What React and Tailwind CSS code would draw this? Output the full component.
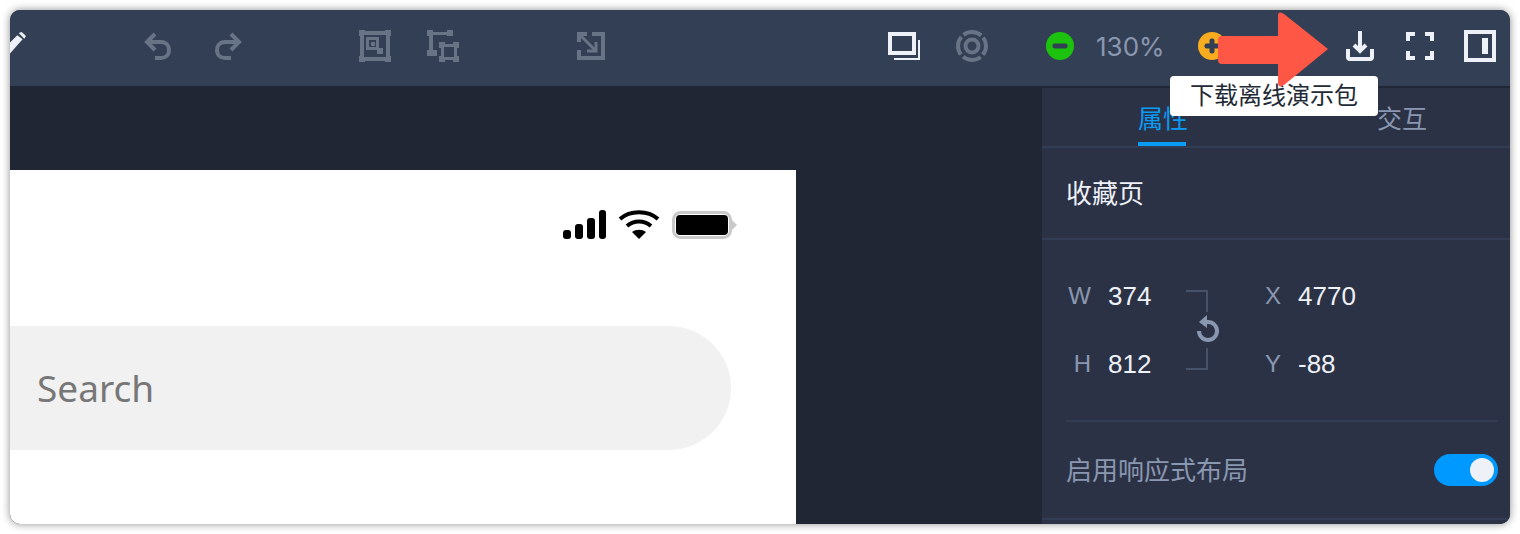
const cjk = '"Liberation Sans", "Noto Sans CJK SC", sans-serif'

function Pencil() {
  return (
    <svg width="17" height="30" viewBox="0 0 17 30">
      <path d="M0 11.6 L7.3 4.3 L12.6 8.3 L0 22.6 Z" fill="#eef1f7" />
      <path d="M8.7 2 L11.7 1 L16 5 L14.3 7.7 Z" fill="#eef1f7" />
    </svg>
  )
}

function Undo({ flip }) {
  return (
    <svg width="28" height="28" viewBox="0 0 28 28" className={flip ? '-scale-x-100' : ''} fill="none" stroke="#687386" strokeWidth="4">
      <path d="M11 2 L3 10 L11 18" />
      <path d="M4 10 H17 C22 10 25 13.5 25 18 C25 23 21.5 26 17 26 H11" />
    </svg>
  )
}

function FrameIcon() {
  return (
    <svg width="32" height="32" viewBox="0 0 32 32" fill="#687386">
      <path d="M0 0h6v1h20V0h6v6h-1v20h1v6h-6v-1H6v1H0v-6h1V6H0z M5 5v22h22V5z" fillRule="evenodd" />
      <path d="M7 7h13v13H7z M10 10v7h7v-7z" fillRule="evenodd" />
      <path d="M12 12h4v4h-4z" />
      <path d="M18 18h6v6h-6z" />
    </svg>
  )
}

function GroupIcon() {
  return (
    <svg width="32" height="32" viewBox="0 0 32 32" fill="#687386">
      <path d="M0 0h6v2h14V0h6v6h-6V5H6v15h4v6H0v-6h2V6H0z" />
      <path d="M12 12h6v2h8v-2h6v6h-2v8h2v6h-6v-2h-8v2h-6v-6h2v-8h-2z M17 17v10h10V17z" fillRule="evenodd" />
    </svg>
  )
}

function ResizeIcon() {
  return (
    <svg width="30" height="30" viewBox="0 0 30 30" fill="none" stroke="#687386" strokeWidth="4">
      <path d="M16 3 H27 V27 H3 V19" />
      <path d="M3 11 V3 H11" />
      <path d="M3 3 L20 20" strokeWidth="3" />
      <path d="M20 11 V20 H11" strokeWidth="3" />
    </svg>
  )
}

function LayersIcon() {
  return (
    <svg width="32" height="28" viewBox="0 0 32 28" fill="none">
      <rect x="2" y="2" width="24" height="19" stroke="#eef1f7" strokeWidth="4" />
      <path d="M6 27 H31 V8" stroke="#eef1f7" strokeWidth="2" />
    </svg>
  )
}

function TargetIcon() {
  return (
    <svg width="32" height="32" viewBox="0 0 32 32" fill="none" stroke="#687386">
      <circle cx="16" cy="16" r="14" strokeWidth="4" strokeDasharray="19 3" strokeDashoffset="9.5" />
      <circle cx="16" cy="16" r="6.5" strokeWidth="4" />
    </svg>
  )
}

function ZoomBtn({ color, plus }) {
  return (
    <svg width="28" height="28" viewBox="0 0 28 28">
      <circle cx="14" cy="14" r="14" fill={color} />
      <rect x="6.5" y="11.5" width="15" height="5" rx="2" fill="#333f54" />
      {plus && <rect x="11.5" y="6.5" width="5" height="15" rx="2" fill="#333f54" />}
    </svg>
  )
}

function DownloadIcon() {
  return (
    <svg width="28" height="30" viewBox="0 0 28 30" fill="none" stroke="#eef1f7" strokeWidth="4">
      <path d="M14 0 V20" />
      <path d="M8 14 L14 20 L20 14" />
      <path d="M2 18 V26 Q2 28 4 28 H24 Q26 28 26 26 V18" />
    </svg>
  )
}

function FullscreenIcon() {
  return (
    <svg width="28" height="28" viewBox="0 0 28 28" fill="none" stroke="#eef1f7" strokeWidth="4">
      <path d="M2 9 V2 H9 M19 2 H26 V9 M26 19 V26 H19 M9 26 H2 V19" />
    </svg>
  )
}

function PanelIcon() {
  return (
    <svg width="32" height="32" viewBox="0 0 32 32" fill="#eef1f7">
      <path d="M0 0h32v32H0z M4 4v24h24V4z" fillRule="evenodd" />
      <rect x="18" y="8" width="6" height="16" />
    </svg>
  )
}

function StatusIcons() {
  return (
    <div className="flex items-center gap-[12px]">
      <svg width="44" height="30" viewBox="0 0 44 30" fill="#000">
        <rect x="0" y="20" width="8" height="9" rx="3" />
        <rect x="12" y="14" width="8" height="15" rx="3" />
        <rect x="24" y="8" width="8" height="21" rx="3" />
        <rect x="36" y="0" width="7" height="29" rx="3" />
      </svg>
      <svg width="42" height="30" viewBox="0 0 42 30" fill="none" stroke="#000" strokeWidth="4" className="-ml-[1px]">
        <path d="M2 9 C12 0 30 0 40 9" />
        <path d="M9 16 C16 10 26 10 33 16" />
        <path d="M21 29 L14 22 C18 19 24 19 28 22 Z" fill="#000" stroke="none" />
      </svg>
      <svg width="65" height="30" viewBox="0 0 65 30">
        <rect x="1.5" y="2.5" width="57" height="25" rx="7" fill="#fff" stroke="#c9c9c9" strokeWidth="3" />
        <rect x="4" y="5" width="52" height="20" rx="4" fill="#000" />
        <path d="M60 10 L65 15 L60 20 Z" fill="#c9c9c9" />
      </svg>
    </div>
  )
}

function Prop({ label, value, labelW, valueW }) {
  return (
    <div className="flex items-center h-[68px]">
      <span className={`${labelW} text-right text-[24px] text-[#8a97b0]`}>{label}</span>
      <span className={`${valueW} pl-[17px] text-[26px] text-[#eef1f7]`}>{value}</span>
    </div>
  )
}

export default function App() {
  return (
    <div className="w-[1520px] h-[534px] bg-white p-[10px]" style={{ fontFamily: cjk }}>
      <div className="relative h-full flex flex-col overflow-hidden rounded-[10px] bg-[#202634] shadow-[0_0_8px_rgba(0,0,0,0.45)]">
        {/* Toolbar */}
        <div className="h-[76px] shrink-0 flex items-center pb-[4px] bg-[#333f54]">
          <Pencil />
          <div className="ml-[117px]"><Undo /></div>
          <div className="ml-[42px]"><Undo flip /></div>
          <div className="ml-[117px]"><FrameIcon /></div>
          <div className="ml-[36px]"><GroupIcon /></div>
          <div className="ml-[117px]"><ResizeIcon /></div>
          <div className="ml-[282px]"><LayersIcon /></div>
          <div className="ml-[36px]"><TargetIcon /></div>
          <div className="ml-[58px]"><ZoomBtn color="#1cc20e" /></div>
          <span className="ml-[22px] w-[102px] text-[26px] text-[#8a97b0]" style={{ fontFamily: 'Inter, sans-serif' }}>130%</span>
          <ZoomBtn color="#f8ac1e" plus />
          <div className="ml-[120px]"><DownloadIcon /></div>
          <div className="ml-[32px]"><FullscreenIcon /></div>
          <div className="ml-[30px]"><PanelIcon /></div>
        </div>

        <div className="flex-1 min-h-0 flex">
          {/* Canvas */}
          <div className="w-[1032px] flex flex-col pt-[84px]">
            <div className="w-[786px] flex-1 bg-white pt-[40px]">
              <div className="flex justify-end pr-[59px]"><StatusIcons /></div>
              <div className="mt-[86px] w-[721px] h-[124px] flex items-center pl-[27px] bg-[#f1f1f1] rounded-r-[62px]">
                <span className="text-[37px] text-[#777]" style={{ fontFamily: '"Noto Sans", sans-serif' }}>Search</span>
              </div>
            </div>
          </div>

          {/* Right panel */}
          <div className="flex-1 mt-[2px] bg-[#2b3245]">
            <div className="h-[60px] flex border-b-2 border-[#323c52]">
              <div className="w-[240px] flex justify-center">
                <span className="h-[58px] pt-[16px] w-[48px] whitespace-nowrap text-[25px] leading-[30px] text-[#0a9bf5] border-b-4 border-[#0a9bf5]">属性</span>
              </div>
              <div className="ml-[95px] pt-[16px] text-[25px] leading-[30px] text-[#8a97b0]">交互</div>
            </div>
            <div className="h-[92px] flex items-center pl-[24px] pt-[2px] border-b-2 border-[#323c52] text-[26px] text-[#eef1f7]">收藏页</div>
            <div className="mx-[24px] mr-[12px] h-[182px] pt-[22px] border-b-2 border-[#323c52] flex">
              <div>
                <Prop label="W" value="374" labelW="w-[25px]" valueW="w-[90px]" />
                <Prop label="H" value="812" labelW="w-[25px]" valueW="w-[90px]" />
              </div>
              <div className="w-[37px] -ml-[10px] h-[80px] mt-[28px] flex flex-col items-end">
                <div className="w-[22px] h-[22px] border-t-2 border-r-2 border-[#465269]" />
                <svg width="24" height="28" viewBox="0 0 24 28" fill="none" stroke="#8a97b0" strokeWidth="4" className="mr-[-11px] mt-[3px] mb-[5px]">
                  <path d="M9 7 H13 A9 9 0 1 1 4 16" />
                  <path d="M12 0 L4 7 L12 13 Z" fill="#8a97b0" stroke="none" />
                </svg>
                <div className="w-[22px] h-[22px] border-b-2 border-r-2 border-[#465269]" />
              </div>
              <div className="ml-[49px]">
                <Prop label="X" value="4770" labelW="w-[24px]" valueW="w-[100px]" />
                <Prop label="Y" value="-88" labelW="w-[24px]" valueW="w-[100px]" />
              </div>
            </div>
            <div className="h-[98px] flex items-center justify-between pl-[24px] pr-[12px] border-b-2 border-[#323c52] text-[26px] text-[#8a97b0]">
              <span className="mt-[2px]">启用响应式布局</span>
              <div className="w-[64px] h-[32px] flex items-center justify-end pr-[4px] rounded-full bg-[#0099ff]">
                <div className="w-[24px] h-[24px] rounded-full bg-[#eef1f7]" />
              </div>
            </div>
          </div>
        </div>

        {/* Tooltip */}
        <div className="absolute left-[1160px] top-[66px] w-[208px] h-[40px] flex items-center justify-center rounded-[4px] bg-white text-[24px] text-[#222a35]">下载离线演示包</div>

        {/* Annotation arrow */}
        <svg width="114" height="80" viewBox="0 0 114 80" className="absolute left-[1208px] top-[0px]">
          <path d="M4 26 H60 V6 Q60 0 66 4 L110 39 L66 75 Q60 79 60 72 V54 H4 Q0 54 0 50 V30 Q0 26 4 26 Z" fill="#ff5745" />
        </svg>
      </div>
    </div>
  )
}
